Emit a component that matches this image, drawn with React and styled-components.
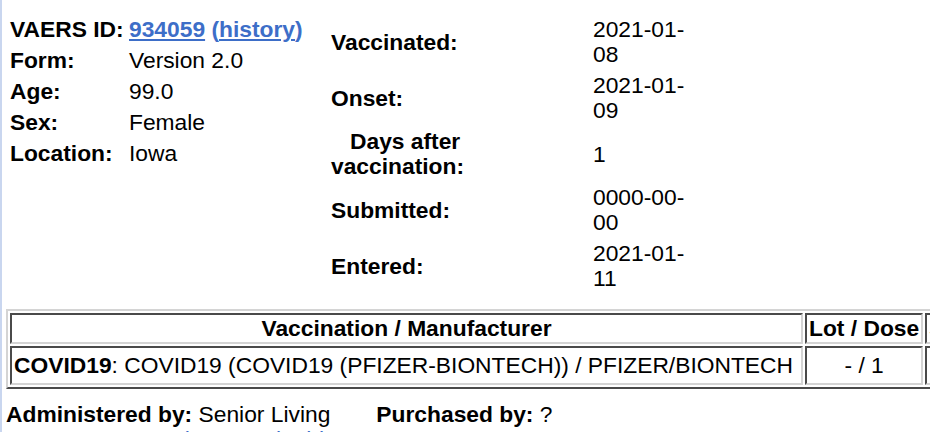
import styled, { createGlobalStyle } from 'styled-components'

const GlobalStyle = createGlobalStyle`
  html, body {
    margin: 0;
    padding: 0;
    background: #fff;
    overflow: hidden;
  }
  body {
    font-family: "Liberation Sans", Arial, Helvetica, sans-serif;
    font-size: 22.8px;
    line-height: 25px;
    color: #000;
  }
`

const Page = styled.div`
  box-sizing: border-box;
  width: 1160px;
  min-height: 432px;
  border-left: 2px solid #c9d6ef;
  padding: 14px 0 0 4px;
`

const Summary = styled.div`
  display: flex;
  align-items: flex-start;
`

const IdGrid = styled.div`
  display: grid;
  grid-template-columns: 119px auto;
  align-content: start;
  width: 321px;
  margin-left: 1px;
`

const IdLabel = styled.div`
  padding: 3px;
  font-weight: bold;
  white-space: nowrap;
`

const IdValue = styled.div`
  padding: 3px;
  white-space: nowrap;
`

const DateGrid = styled.div`
  display: grid;
  grid-template-columns: 150px 100px;
  column-gap: 112px;
  align-items: center;
`

const DateLabel = styled.div`
  padding: 3px;
  font-weight: bold;
  text-indent: ${(p) => p.$indent || 0}px;
`

const DateValue = styled.div`
  padding: 3px;
`

const Link = styled.a`
  color: #3d6ec8;
  text-decoration: underline;
  font-weight: ${(p) => (p.$bold ? 'bold' : 'normal')};
`

const Paren = styled.span`
  color: #3d6ec8;
  font-weight: bold;
`

const Records = styled.table`
  margin-top: 15px;
  border-collapse: separate;
  border-spacing: 2px;
  border: 2px solid;
  border-color: #d4d4d4 #4a4a4a #4a4a4a #d4d4d4;
`

const HeadCell = styled.th`
  border: 2px solid;
  border-color: #4a4a4a #d4d4d4 #d4d4d4 #4a4a4a;
  padding: 1px 2px;
  font-weight: bold;
  text-align: center;
  white-space: nowrap;
`

const Cell = styled.td`
  border: 2px solid;
  border-color: #4a4a4a #d4d4d4 #d4d4d4 #4a4a4a;
  padding: 5px ${(p) => p.$padRight || 2}px 5px 2px;
  white-space: nowrap;
  text-align: ${(p) => (p.$center ? 'center' : 'left')};
`

const Facts = styled.div`
  display: flex;
  gap: 46px;
  margin-top: 13px;
  white-space: nowrap;
`

const Line = styled.div`
  white-space: nowrap;
`

const dates = [
  { label: 'Vaccinated:', value: '2021-01-08' },
  { label: 'Onset:', value: '2021-01-09' },
  { label: 'Days after vaccination:', value: '1', indent: 19 },
  { label: 'Submitted:', value: '0000-00-00' },
  { label: 'Entered:', value: '2021-01-11' },
]

export default function App() {
  return (
    <Page>
      <GlobalStyle />
      <Summary>
        <IdGrid>
          <IdLabel>VAERS ID:</IdLabel>
          <IdValue>
            <Link $bold href="#">934059</Link>{' '}
            <Paren>
              (<Link $bold href="#">history</Link>)
            </Paren>
          </IdValue>
          <IdLabel>Form:</IdLabel>
          <IdValue>Version 2.0</IdValue>
          <IdLabel>Age:</IdLabel>
          <IdValue>99.0</IdValue>
          <IdLabel>Sex:</IdLabel>
          <IdValue>Female</IdValue>
          <IdLabel>Location:</IdLabel>
          <IdValue>Iowa</IdValue>
        </IdGrid>
        <DateGrid>
          {dates.flatMap((d) => [
            <DateLabel key={d.label} $indent={d.indent}>{d.label}</DateLabel>,
            <DateValue key={d.label + '-v'}>{d.value}</DateValue>,
          ])}
        </DateGrid>
      </Summary>

      <Records>
        <thead>
          <tr>
            <HeadCell>Vaccination / Manufacturer</HeadCell>
            <HeadCell>Lot / Dose</HeadCell>
            <HeadCell>Site / Route</HeadCell>
          </tr>
        </thead>
        <tbody>
          <tr>
            <Cell $padRight={8}>
              <b>COVID19</b>: COVID19 (COVID19 (PFIZER-BIONTECH)) / PFIZER/BIONTECH
            </Cell>
            <Cell $center>- / 1</Cell>
            <Cell $center>- / -</Cell>
          </tr>
        </tbody>
      </Records>

      <Facts>
        <span>
          <b>Administered by:</b> Senior Living
        </span>
        <span>
          <b>Purchased by:</b> ?
        </span>
      </Facts>
      <Line>
        <b>Symptoms:</b> <Link href="#">Death</Link>, <Link href="#">Unevaluable event</Link>
      </Line>
    </Page>
  )
}
